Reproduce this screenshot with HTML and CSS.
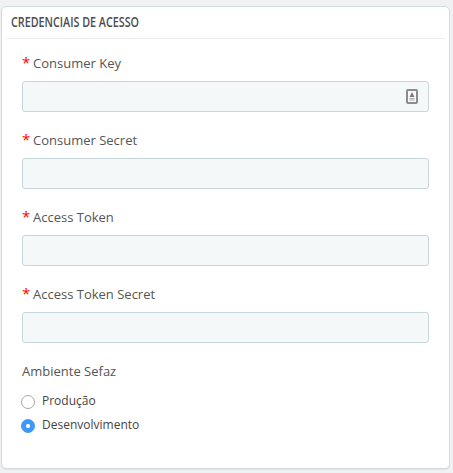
FILE: index.html
```html
<!DOCTYPE html>
<html lang="pt-BR">
<head>
<meta charset="utf-8">
<title>Credenciais de acesso</title>
<link rel="stylesheet" href="styles.css">
</head>
<body>
<form class="panel">
  <h3 class="panel-heading"><svg class="heading-text" width="130" height="20" viewBox="0 0 130 20"><text x="0" y="15" textLength="128" lengthAdjust="spacingAndGlyphs">CREDENCIAIS DE ACESSO</text></svg></h3>
  <div class="fields">
    <div class="field">
      <label class="label" for="key"><span class="required">*</span>Consumer Key</label>
      <div class="input-wrap">
        <input class="input" id="key" type="text">
        <svg class="autofill" width="12" height="16" viewBox="0 0 12 16"><rect x="1" y="1" width="10" height="13" rx="1" fill="#f8f8f8" stroke="#8c8c8c" stroke-width="2"/><path d="M6 3L7.2 5.5L8.5 8H3.5L4.8 5.5Z" fill="#777"/><path d="M3.5 9.5H8.5M3.5 11H8.5" stroke="#aaa"/></svg>
      </div>
    </div>
    <div class="field">
      <label class="label" for="secret"><span class="required">*</span>Consumer Secret</label>
      <input class="input" id="secret" type="text">
    </div>
    <div class="field">
      <label class="label" for="token"><span class="required">*</span>Access Token</label>
      <input class="input" id="token" type="text">
    </div>
    <div class="field">
      <label class="label" for="token-secret"><span class="required">*</span>Access Token Secret</label>
      <input class="input" id="token-secret" type="text">
    </div>
    <div class="label">Ambiente Sefaz</div>
    <label class="option"><input class="radio" type="radio" name="env"><span>Produção</span></label>
    <label class="option"><input class="radio" type="radio" name="env" checked><span>Desenvolvimento</span></label>
  </div>
</form>
</body>
</html>
```
FILE: styles.css
```css
* { box-sizing: border-box; }
body {
  margin: 0;
  padding: 6px 3px 0 1px;
  height: 473px;
  overflow: hidden;
  background: #eff1f2;
  color: #444;
  font-family: "Open Sans", "Noto Sans", sans-serif;
}
.panel {
  height: 463px;
  padding: 0 4px;
  background: #fff;
  border: 1px solid #d3dbde;
  border-radius: 5px;
  box-shadow: 0 1px 0 #dfe3e5;
}
.panel-heading {
  height: 32px;
  margin: 0;
  padding: 5px 0 0 5px;
  border-bottom: 1px solid #eaedef;
}
.heading-text {
  display: block;
  overflow: visible;
  fill: #4c4c4c;
  font-family: "Open Sans", sans-serif;
  font-size: 15px;
  font-weight: 600;
}
.fields { padding: 14px 16px 0; }
.field { height: 77px; }
.label {
  display: flex;
  height: 20px;
  margin-bottom: 8px;
  align-items: center;
  color: #555;
  font-size: 13px;
  line-height: 20px;
  white-space: nowrap;
}
.required {
  width: 11px;
  padding-bottom: 2px;
  color: #f00;
  font-size: 15px;
  font-weight: 500;
}
.input-wrap { position: relative; }
.input {
  display: block;
  width: 407px;
  height: 31px;
  padding: 6px 8px;
  background: #f5f8f9;
  border: 1px solid #c7d6db;
  border-radius: 3px;
}
.autofill {
  position: absolute;
  top: 8px;
  right: 11px;
}
.option {
  display: flex;
  height: 24px;
  align-items: center;
  color: #444;
  font-size: 12px;
}
.option span {
  position: relative;
  top: -1px;
}
.radio {
  flex: none;
  width: 14px;
  height: 14px;
  margin: 2px 7px 0 -1px;
  appearance: none;
  background: #fff;
  border: 1px solid #a8a8a8;
  border-radius: 50%;
}
.radio:checked {
  background: radial-gradient(circle, #fff 1.7px, #3b99fc 2.4px);
  border-color: #3b99fc;
}
```
